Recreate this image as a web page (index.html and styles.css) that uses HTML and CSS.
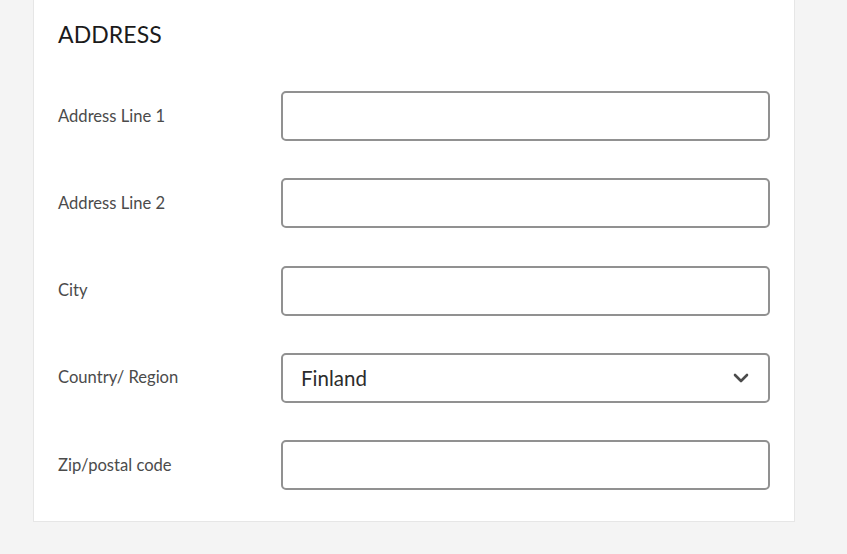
FILE: index.html
```html
<!DOCTYPE html>
<html lang="en">
<head>
<meta charset="utf-8">
<title>Address</title>
<link rel="stylesheet" href="styles.css">
</head>
<body>
<div class="page">
  <section class="card">
    <h2 class="title">ADDRESS</h2>
    <div class="form">
      <label class="label" for="a1">Address Line 1</label>
      <input class="field" id="a1" type="text">
      <label class="label" for="a2">Address Line 2</label>
      <input class="field" id="a2" type="text">
      <label class="label" for="city">City</label>
      <input class="field" id="city" type="text">
      <label class="label" for="country">Country/ Region</label>
      <div class="field select" id="country">
        <span class="select-value">Finland</span>
        <svg class="chevron" width="16" height="10" viewBox="0 0 16 10"><path d="M2 2 L8 8 L14 2" fill="none" stroke="#4b4b4b" stroke-width="2.6" stroke-linecap="round" stroke-linejoin="round"/></svg>
      </div>
      <label class="label" for="zip">Zip/postal code</label>
      <input class="field" id="zip" type="text">
    </div>
  </section>
</div>
</body>
</html>
```

FILE: styles.css
```css
html, body {
  margin: 0;
  padding: 0;
  background: #f4f4f4;
}
body {
  font-family: Lato, "Open Sans", "Liberation Sans", sans-serif;
  width: 847px;
  height: 554px;
  overflow: hidden;
}
.page {
  padding: 0 52px 0 33px;
}
.card {
  box-sizing: border-box;
  width: 762px;
  background: #fff;
  border: 1px solid #e6e6e6;
  border-top: none;
  padding: 18px 24px 31px 24px;
}
.title {
  margin: 0 0 41px 0;
  font-size: 23px;
  font-weight: 400;
  line-height: 32px;
  color: #1b1b1b;
  letter-spacing: 0.1px;
}
.form {
  display: grid;
  grid-template-columns: 223px 489px;
  row-gap: 37.25px;
  align-items: center;
}
.label {
  font-size: 16.6px;
  color: #4b4b4b;
  padding-bottom: 1px;
}
.field {
  box-sizing: border-box;
  width: 489px;
  height: 50px;
  border: 2px solid #919191;
  border-radius: 5px;
  background: #fff;
  margin: 0;
  padding: 0 18px;
  font: inherit;
  outline: none;
}
.select {
  display: flex;
  align-items: center;
  justify-content: space-between;
  padding: 0 19px 0 18px;
}
.select-value {
  font-size: 20.5px;
  color: #2c2c2c;
}
.chevron {
  display: block;
}
```
